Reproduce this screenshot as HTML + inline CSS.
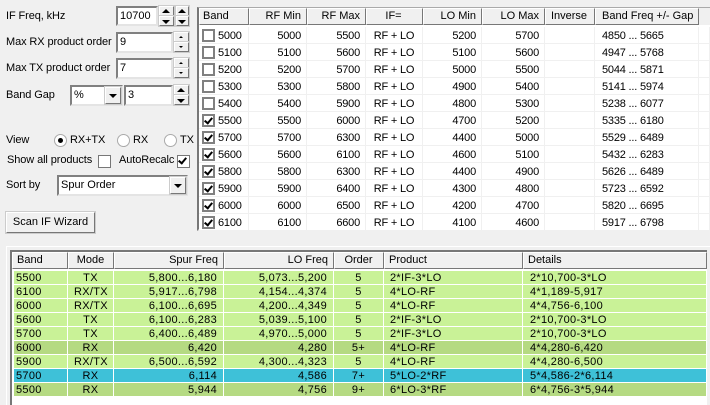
<!DOCTYPE html>
<html><head><meta charset="utf-8"><style>
html,body{margin:0;padding:0}
body{width:710px;height:405px;overflow:hidden;background:#f0f0f0;position:relative;font:11px/14px "Liberation Sans",sans-serif;color:#000}
.a{position:absolute;white-space:nowrap;letter-spacing:-.1px}
.in{position:absolute;box-sizing:border-box;background:#fff;border:2px solid;border-color:#808080 #e4e4e4 #e4e4e4 #808080;padding-left:2px;line-height:17px;height:21px}
.sb{position:absolute;box-sizing:border-box;background:#f0f0f0;border:1px solid;border-color:#fff #777 #777 #fff;box-shadow:0 0 0 1px #ccc}
.up,.dn{position:absolute;width:0;height:0;border-left:4px solid transparent;border-right:4px solid transparent}
.up{border-bottom:4px solid #000}.dn{border-top:4px solid #000}
.s .up,.s .dn{border-left-width:2px;border-right-width:2px}
.s .up{border-bottom-width:2px}.s .dn{border-top-width:2px}
.g{position:absolute;box-sizing:border-box}
table{border-collapse:separate;border-spacing:0;table-layout:fixed;position:absolute}
td,th{padding:0;font-weight:normal;white-space:nowrap;overflow:hidden;box-sizing:border-box}
.r{text-align:right}.c{text-align:center}.l{text-align:left}
#t1 th{height:17px;background:#f0f0f0;border:1px solid;border-color:#fff #777 #777 #fff;padding:0 5px 0 3px;line-height:15px}
#t1 th.p{padding-left:6px}
#t1 td{height:17px;background:#fff;border-right:1px solid #f0f0f0;border-bottom:1px solid #f0f0f0;padding:2px 5px 0;line-height:14px;letter-spacing:-.2px}
#t1 td.r{padding-right:5px}
#t1 td.f{padding-left:7px}
#t1 td.b{padding:2px 0 0 19px;position:relative}
#t2 th{height:17px;background:#f0f0f0;border:1px solid;border-color:#fff #777 #777 #fff;padding:0 5px 0 4px;line-height:15px}
#t2 td{height:14px;border-right:1px solid #fff;border-bottom:1px solid #fff;padding:1px 6px 0;line-height:12px;letter-spacing:.3px}
#t2 td:first-child{border-left:2px solid #fff;padding-left:2px}
#t2 td.d{padding-left:7px}
#t2 tr.g1 td{background:#c9f297}
#t2 tr.g2 td{background:#b5da82}
#t2 tr.b1 td{background:#3ec1d8}
.cb{position:absolute;left:3px;top:2px;width:13px;height:13px;box-sizing:border-box;border:2px solid #808080;background:#fff}
.cb.k::after,.k2::after{content:"";position:absolute;left:2px;top:0;width:3px;height:6px;border:solid #000;border-width:0 2px 2px 0;transform:rotate(40deg)}
.rd{position:absolute;box-sizing:border-box;width:13px;height:13px;border-radius:50%;border:1px solid #aaa;background:#fff}
.rd.on::after{content:"";position:absolute;left:3px;top:3px;width:5px;height:5px;border-radius:50%;background:#000}
</style></head><body>

<div class="a" style="left:6px;top:9px">IF Freq, kHz</div>
<div class="in" style="left:116px;top:6px;width:42px;height:20px">10700</div>
<div class="sb" style="left:159px;top:6px;width:15px;height:10px"><i class="up" style="left:2px;top:2px"></i></div>
<div class="sb" style="left:159px;top:16px;width:15px;height:10px"><i class="dn" style="left:2px;top:3px"></i></div>
<div class="sb" style="left:176px;top:6px;width:13px;height:10px"><i class="up" style="left:1px;top:2px"></i></div>
<div class="sb" style="left:176px;top:16px;width:13px;height:10px"><i class="dn" style="left:1px;top:3px"></i></div>

<div class="a" style="left:6px;top:35px">Max RX product order</div>
<div class="in" style="left:116px;top:32px;width:57px">9</div>
<div class="sb s" style="left:174px;top:32px;width:15px;height:10px"><i class="up" style="left:4px;top:3px"></i></div>
<div class="sb s" style="left:174px;top:42px;width:15px;height:10px"><i class="dn" style="left:4px;top:3px"></i></div>

<div class="a" style="left:6px;top:61px">Max TX product order</div>
<div class="in" style="left:116px;top:58px;width:57px">7</div>
<div class="sb s" style="left:174px;top:58px;width:15px;height:10px"><i class="up" style="left:4px;top:3px"></i></div>
<div class="sb s" style="left:174px;top:68px;width:15px;height:10px"><i class="dn" style="left:4px;top:3px"></i></div>

<div class="a" style="left:6px;top:88px">Band Gap</div>
<div class="in" style="left:70px;top:85px;width:53px">%</div>
<div class="sb" style="left:105px;top:87px;width:16px;height:17px"><i class="dn" style="left:3px;top:6px"></i></div>
<div class="in" style="left:124px;top:85px;width:49px">3</div>
<div class="sb" style="left:174px;top:85px;width:15px;height:10px"><i class="up" style="left:2px;top:2px"></i></div>
<div class="sb" style="left:174px;top:95px;width:15px;height:10px"><i class="dn" style="left:2px;top:3px"></i></div>

<div class="a" style="left:6px;top:133px">View</div>
<div class="rd on" style="left:54px;top:134px"></div><div class="a" style="left:70px;top:133px">RX+TX</div>
<div class="rd" style="left:117px;top:134px"></div><div class="a" style="left:133px;top:133px">RX</div>
<div class="rd" style="left:164px;top:134px"></div><div class="a" style="left:180px;top:133px">TX</div>

<div class="a" style="left:7px;top:153px">Show all products</div>
<div class="g" style="left:98px;top:155px;width:13px;height:13px;background:#fff;border:1px solid #777"></div>
<div class="a" style="left:119px;top:153px">AutoRecalc</div>
<div class="g k2" style="left:177px;top:155px;width:13px;height:13px;background:#fff;border:1px solid #777"></div>

<div class="a" style="left:6px;top:178px">Sort by</div>
<div class="in" style="left:57px;top:175px;width:131px;padding-left:2px">Spur Order</div>
<div class="sb" style="left:170px;top:177px;width:16px;height:17px"><i class="dn" style="left:3px;top:6px"></i></div>

<div class="g" style="left:6px;top:212px;width:89px;height:21px;background:#f0f0f0;border:1px solid;border-color:#fff #777 #777 #fff;box-shadow:0 0 0 1px #ccc;text-align:center;line-height:18px">Scan IF Wizard</div>

<!-- top grid -->
<div class="g" style="left:197px;top:7px;width:513px;height:224px;background:#fff;border-left:2px solid #777;border-top:1px solid #aaa;border-bottom:2px solid #ddd"></div>
<table id="t1" style="left:199px;top:8px;width:511px">
<colgroup><col style="width:50px"><col style="width:58px"><col style="width:59px"><col style="width:57px"><col style="width:59px"><col style="width:63px"><col style="width:50px"><col style="width:104px"><col style="width:11px"></colgroup>
<tr><th class="l">Band</th><th class="r">RF Min</th><th class="r">RF Max</th><th class="c">IF=</th><th class="r">LO Min</th><th class="r">LO Max</th><th class="c">Inverse</th><th class="l p">Band Freq +/- Gap</th><th style="background:#f0f0f0;border:0"></th></tr>
<tr style="height:2px"><td colspan="9" style="height:2px;border:0;padding:0;background:#fff;line-height:2px;font-size:0"></td></tr>
<tr><td class="b"><i class="cb"></i>5000</td><td class="r">5000</td><td class="r">5500</td><td class="c">RF + LO</td><td class="r">5200</td><td class="r">5700</td><td></td><td class="f">4850 ... 5665</td><td></td></tr>
<tr><td class="b"><i class="cb"></i>5100</td><td class="r">5100</td><td class="r">5600</td><td class="c">RF + LO</td><td class="r">5100</td><td class="r">5600</td><td></td><td class="f">4947 ... 5768</td><td></td></tr>
<tr><td class="b"><i class="cb"></i>5200</td><td class="r">5200</td><td class="r">5700</td><td class="c">RF + LO</td><td class="r">5000</td><td class="r">5500</td><td></td><td class="f">5044 ... 5871</td><td></td></tr>
<tr><td class="b"><i class="cb"></i>5300</td><td class="r">5300</td><td class="r">5800</td><td class="c">RF + LO</td><td class="r">4900</td><td class="r">5400</td><td></td><td class="f">5141 ... 5974</td><td></td></tr>
<tr><td class="b"><i class="cb"></i>5400</td><td class="r">5400</td><td class="r">5900</td><td class="c">RF + LO</td><td class="r">4800</td><td class="r">5300</td><td></td><td class="f">5238 ... 6077</td><td></td></tr>
<tr><td class="b"><i class="cb k"></i>5500</td><td class="r">5500</td><td class="r">6000</td><td class="c">RF + LO</td><td class="r">4700</td><td class="r">5200</td><td></td><td class="f">5335 ... 6180</td><td></td></tr>
<tr><td class="b"><i class="cb k"></i>5700</td><td class="r">5700</td><td class="r">6300</td><td class="c">RF + LO</td><td class="r">4400</td><td class="r">5000</td><td></td><td class="f">5529 ... 6489</td><td></td></tr>
<tr><td class="b"><i class="cb k"></i>5600</td><td class="r">5600</td><td class="r">6100</td><td class="c">RF + LO</td><td class="r">4600</td><td class="r">5100</td><td></td><td class="f">5432 ... 6283</td><td></td></tr>
<tr><td class="b"><i class="cb k"></i>5800</td><td class="r">5800</td><td class="r">6300</td><td class="c">RF + LO</td><td class="r">4400</td><td class="r">4900</td><td></td><td class="f">5626 ... 6489</td><td></td></tr>
<tr><td class="b"><i class="cb k"></i>5900</td><td class="r">5900</td><td class="r">6400</td><td class="c">RF + LO</td><td class="r">4300</td><td class="r">4800</td><td></td><td class="f">5723 ... 6592</td><td></td></tr>
<tr><td class="b"><i class="cb k"></i>6000</td><td class="r">6000</td><td class="r">6500</td><td class="c">RF + LO</td><td class="r">4200</td><td class="r">4700</td><td></td><td class="f">5820 ... 6695</td><td></td></tr>
<tr><td class="b"><i class="cb k"></i>6100</td><td class="r">6100</td><td class="r">6600</td><td class="c">RF + LO</td><td class="r">4100</td><td class="r">4600</td><td></td><td class="f">5917 ... 6798</td><td></td></tr>
</table>

<!-- bottom grid -->
<div class="g" style="left:6px;top:246px;width:704px;height:159px;background:#f0f0f0;border:1px solid #fff;border-bottom:0;border-right:0"></div>
<div class="g" style="left:10px;top:250px;width:697px;height:155px;background:#fff;border-left:2px solid #777;border-top:2px solid #777"></div>
<table id="t2" style="left:12px;top:252px;width:695px">
<colgroup><col style="width:56px"><col style="width:46px"><col style="width:110px"><col style="width:110px"><col style="width:50px"><col style="width:139px"><col style="width:184px"></colgroup>
<tr><th class="l">Band</th><th class="c">Mode</th><th class="r">Spur Freq</th><th class="r">LO Freq</th><th class="c">Order</th><th class="l">Product</th><th class="l">Details</th></tr>
<tr style="height:2px"><td colspan="7" style="height:2px;border:0;padding:0;background:#fff;line-height:2px;font-size:0"></td></tr>
<tr class="g1"><td>5500</td><td class="c">TX</td><td class="r">5,800...6,180</td><td class="r">5,073...5,200</td><td class="c">5</td><td>2*IF-3*LO</td><td class="d">2*10,700-3*LO</td></tr>
<tr class="g1"><td>6100</td><td class="c">RX/TX</td><td class="r">5,917...6,798</td><td class="r">4,154...4,374</td><td class="c">5</td><td>4*LO-RF</td><td class="d">4*1,189-5,917</td></tr>
<tr class="g1"><td>6000</td><td class="c">RX/TX</td><td class="r">6,100...6,695</td><td class="r">4,200...4,349</td><td class="c">5</td><td>4*LO-RF</td><td class="d">4*4,756-6,100</td></tr>
<tr class="g1"><td>5600</td><td class="c">TX</td><td class="r">6,100...6,283</td><td class="r">5,039...5,100</td><td class="c">5</td><td>2*IF-3*LO</td><td class="d">2*10,700-3*LO</td></tr>
<tr class="g1"><td>5700</td><td class="c">TX</td><td class="r">6,400...6,489</td><td class="r">4,970...5,000</td><td class="c">5</td><td>2*IF-3*LO</td><td class="d">2*10,700-3*LO</td></tr>
<tr class="g2"><td>6000</td><td class="c">RX</td><td class="r">6,420</td><td class="r">4,280</td><td class="c">5+</td><td>4*LO-RF</td><td class="d">4*4,280-6,420</td></tr>
<tr class="g1"><td>5900</td><td class="c">RX/TX</td><td class="r">6,500...6,592</td><td class="r">4,300...4,323</td><td class="c">5</td><td>4*LO-RF</td><td class="d">4*4,280-6,500</td></tr>
<tr class="b1"><td>5700</td><td class="c">RX</td><td class="r">6,114</td><td class="r">4,586</td><td class="c">7+</td><td>5*LO-2*RF</td><td class="d">5*4,586-2*6,114</td></tr>
<tr class="g2"><td>5500</td><td class="c">RX</td><td class="r">5,944</td><td class="r">4,756</td><td class="c">9+</td><td>6*LO-3*RF</td><td class="d">6*4,756-3*5,944</td></tr>
</table>
</body></html>
